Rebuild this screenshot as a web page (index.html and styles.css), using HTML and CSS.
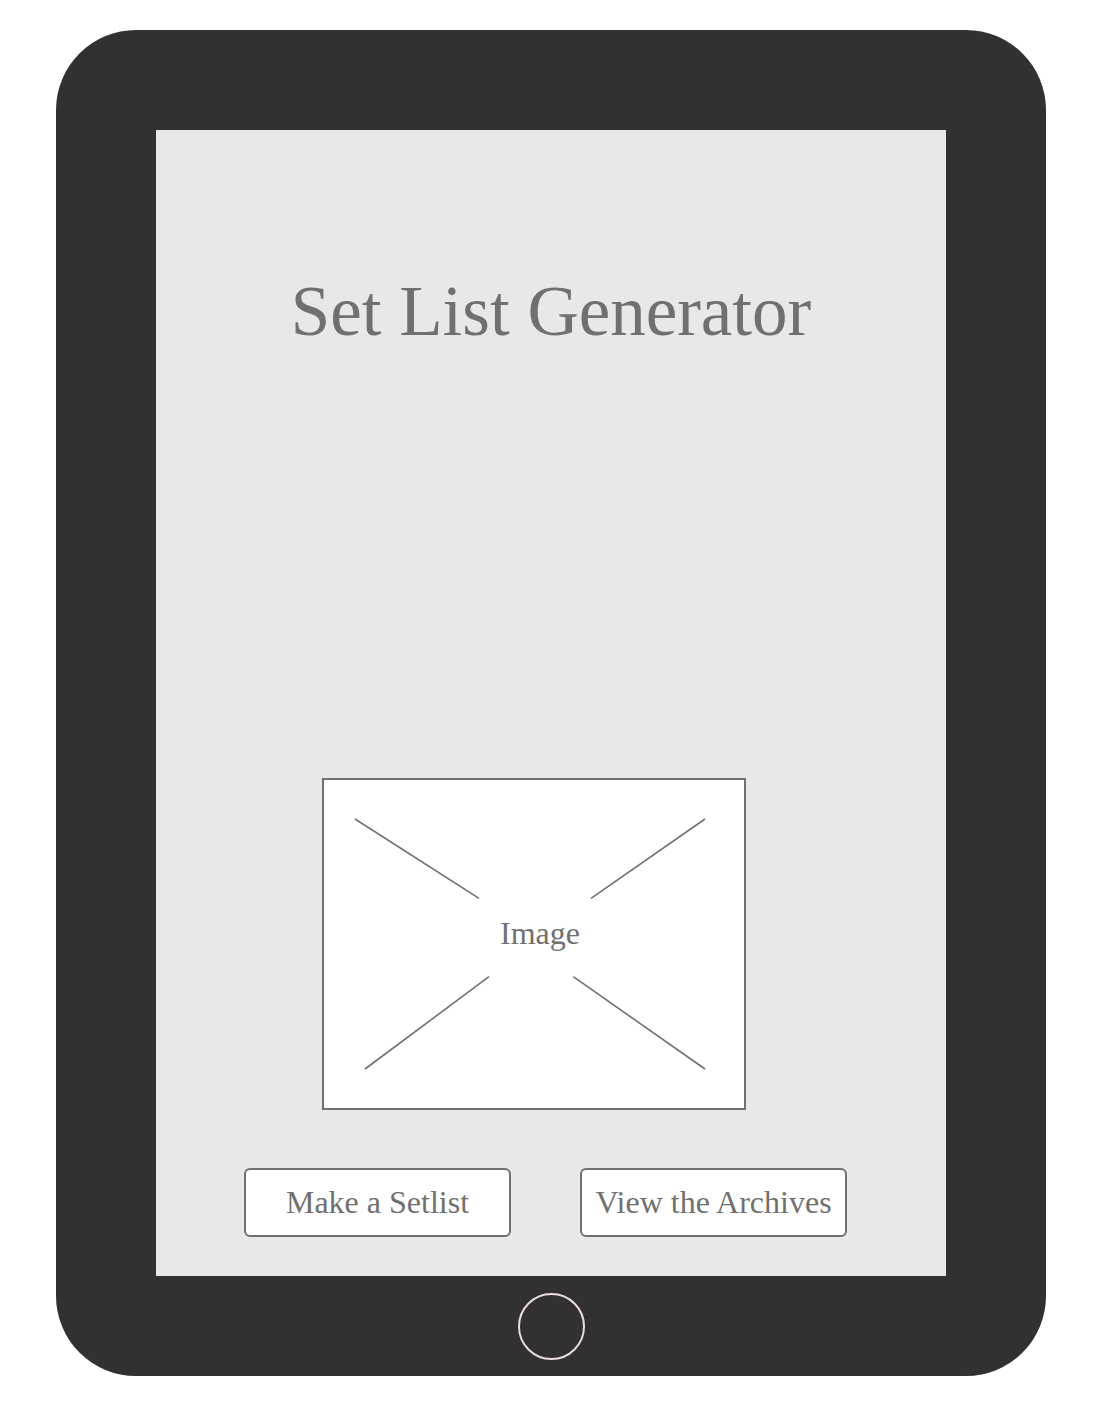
FILE: index.html
```html
<!DOCTYPE html>
<html lang="en">
<head>
<meta charset="utf-8">
<title>Set List Generator</title>
<link rel="stylesheet" href="styles.css">
</head>
<body>
  <div class="device">
    <main class="screen">
      <h1 class="title">Set List Generator</h1>
      <div class="image-box">
        <svg class="placeholder" width="420" height="328" viewBox="0 0 420 328" xmlns="http://www.w3.org/2000/svg">
          <g stroke="#707070" stroke-width="1.6" fill="none">
            <line x1="31" y1="39" x2="155" y2="118.3"/>
            <line x1="267" y1="118.3" x2="381" y2="39"/>
            <line x1="41" y1="289" x2="165" y2="196.7"/>
            <line x1="249.3" y1="196.7" x2="381" y2="289"/>
          </g>
          <text x="216" y="164" text-anchor="middle" class="image-label">Image</text>
        </svg>
      </div>
      <div class="actions">
        <button class="btn">Make a Setlist</button>
        <button class="btn">View the Archives</button>
      </div>
    </main>
    <div class="bezel-bottom">
      <div class="home-button"></div>
    </div>
  </div>
</body>
</html>
```

FILE: styles.css
```css
html, body {
  margin: 0;
  padding: 0;
  background: #ffffff;
}

body {
  font-family: "Liberation Serif", "Times New Roman", serif;
}

.device {
  margin: 30px 0 0 56px;
  width: 990px;
  height: 1346px;
  box-sizing: border-box;
  padding: 100px 100px 0 100px;
  background: #323031;
  border-radius: 80px;
  display: flex;
  flex-direction: column;
}

.screen {
  width: 790px;
  height: 1146px;
  box-sizing: border-box;
  background: #e8e8e8;
  padding-top: 146px;
  display: flex;
  flex-direction: column;
}

.title {
  margin: 0;
  font-family: "Liberation Serif", "Times New Roman", serif;
  font-weight: normal;
  font-size: 71px;
  line-height: 71px;
  color: #707070;
  text-align: center;
}

.image-box {
  margin: 431px 0 0 166px;
  width: 424px;
  height: 332px;
  box-sizing: border-box;
  border: 2px solid #707070;
  background: #ffffff;
  display: flex;
}

.placeholder {
  display: block;
}

.image-label {
  font-family: "Liberation Serif", "Times New Roman", serif;
  font-size: 32px;
  fill: #707070;
}

.actions {
  margin-top: 58px;
  padding-left: 88px;
  display: flex;
  gap: 69px;
}

.btn {
  width: 267px;
  height: 69px;
  box-sizing: border-box;
  border: 2px solid #707070;
  border-radius: 6px;
  background: #ffffff;
  color: #707070;
  font-family: "Liberation Serif", "Times New Roman", serif;
  font-size: 32px;
  padding: 0;
  margin: 0;
  display: flex;
  align-items: center;
  justify-content: center;
}

.bezel-bottom {
  flex: 1;
  display: flex;
  align-items: center;
  justify-content: center;
}

.home-button {
  width: 67px;
  height: 67px;
  box-sizing: border-box;
  border: 2px solid #eddcdc;
  border-radius: 50%;
}
```
